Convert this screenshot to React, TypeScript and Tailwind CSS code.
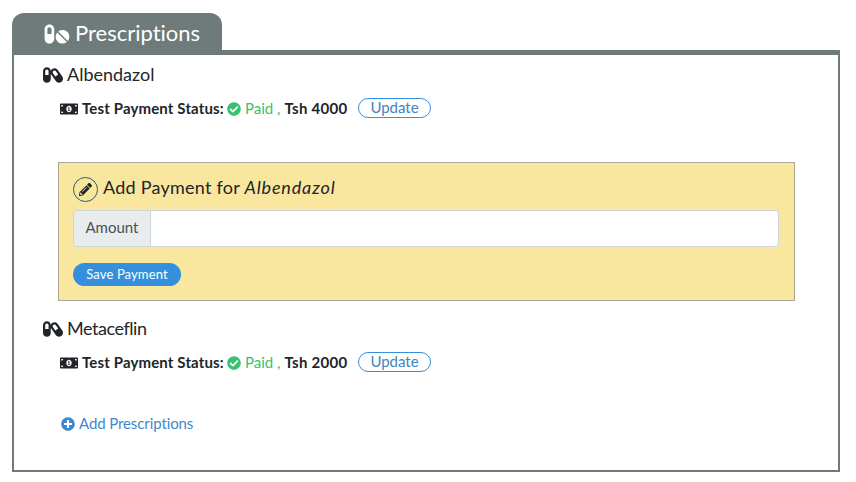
import React from "react";
import { FaPills, FaCapsules, FaMoneyBillAlt, FaCheckCircle, FaPencilAlt, FaPlusCircle } from "react-icons/fa";

function DrugName({ name, spacing }: { name: string; spacing: string }) {
  return (
    <h2 className="flex h-[24px] items-center pl-[29px] text-[18px] leading-[24px]">
      <FaCapsules className="mr-[4px] h-[18px] w-[20px] shrink-0" />
      <span className={`pb-[2px] ${spacing}`}>{name}</span>
    </h2>
  );
}

function PaymentStatus({ amount }: { amount: string }) {
  return (
    <div className="flex h-[20px] items-center pl-[46px] text-[15px] leading-[20px]">
      <FaMoneyBillAlt className="mr-[4px] mt-px h-[16px] w-[18px] shrink-0" />
      <span className="w-[145px] whitespace-nowrap font-bold tracking-[0.14px]">Test Payment Status:</span>
      <FaCheckCircle className="mr-[4px] mt-px h-[14px] w-[14px] shrink-0 text-[#38c172]" />
      <span className="w-[39.5px] text-[#38c172]">Paid ,</span>
      <span className="w-[73px] font-bold tracking-[0.25px]">{amount}</span>
      <button className="h-[20px] w-[73px] rounded-full border border-[#3490dc] pb-px pl-px text-[15px] leading-[17px] text-[#3f83c5]">
        Update
      </button>
    </div>
  );
}

export default function App() {
  return (
    <main className="h-[482px] w-[856px] bg-white pl-[12px] pt-[13px] font-['Lato','Open_Sans',sans-serif] text-[#212529] [font-variant-ligatures:none]">
      <header className="flex h-[37px] w-[210px] items-center rounded-t-[12px] bg-[#6e7b7a] pl-[32px] pt-[4px] text-[22px] text-white">
        <FaPills className="mr-[5px] h-[22px] w-[26px] shrink-0" />
        <h1 className="pb-[2px] tracking-[0px]">Prescriptions</h1>
      </header>
      <section className="h-[422px] w-[828px] border-2 border-t-[5px] border-[#6e7b7a] pt-[8px]">
        <DrugName name="Albendazol" spacing="tracking-[0px]" />
        <div className="mt-[11px]">
          <PaymentStatus amount="Tsh 4000" />
        </div>
        <form className="ml-[44px] mt-[44px] h-[139px] w-[737px] border border-[#a9a796] bg-[#f9e79f] pl-[14px] pt-[13px]">
          <h3 className="flex h-[26px] items-center text-[18px] leading-[24px]">
            <span className="mr-[5px] flex h-[25px] w-[25px] shrink-0 items-center justify-center rounded-full border border-[#355b67]">
              <FaPencilAlt className="h-[13px] w-[13px]" />
            </span>
            <span className="pb-[4px] tracking-[0.24px]">
              Add Payment for <em className="tracking-[0.85px]">Albendazol</em>
            </span>
          </h3>
          <div className="mt-[8px] flex h-[37px] w-[706px]">
            <label htmlFor="amount" className="flex w-[78px] items-center justify-center rounded-l-[4px] border border-[#ced4da] bg-[#e9ecef] pb-[2px] text-[15px] text-[#495057]">
              Amount
            </label>
            <input id="amount" className="-ml-px min-w-0 flex-1 rounded-r-[4px] border border-[#ced4da] bg-white px-3 text-[15px] outline-none" />
          </div>
          <button type="button" className="mt-[16px] block h-[23px] w-[108px] rounded-full bg-[#3490dc] pb-px text-[13px] leading-[22px] tracking-[0.12px] text-white">
            Save Payment
          </button>
        </form>
        <div className="mt-[16px]">
          <DrugName name="Metaceflin" spacing="tracking-[-0.45px]" />
        </div>
        <div className="mt-[11px]">
          <PaymentStatus amount="Tsh 2000" />
        </div>
        <a className="ml-[47px] mt-[42px] flex h-[20px] items-center text-[15px] leading-[20px] text-[#3f87cd]">
          <FaPlusCircle className="mr-[4px] h-[14px] w-[14px] shrink-0" />
          <span className="pb-[2px] tracking-[-0.1px]">Add Prescriptions</span>
        </a>
      </section>
    </main>
  );
}
